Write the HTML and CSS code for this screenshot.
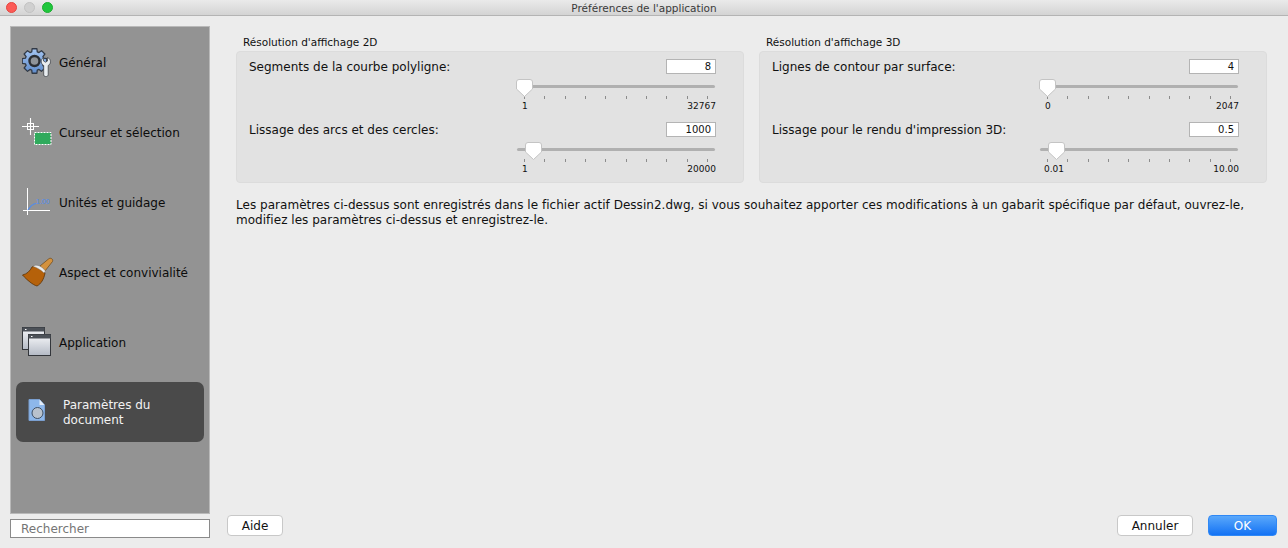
FILE: index.html
```html
<!DOCTYPE html>
<html lang="fr">
<head>
<meta charset="utf-8">
<title>Préférences de l'application</title>
<link rel="stylesheet" href="styles.css">
</head>
<body>
<div class="window">
  <header class="titlebar">
    <div class="lights"><span class="light red"></span><span class="light gray"></span><span class="light green"></span></div>
    <div class="title">Préférences de l'application</div>
  </header>
  <div class="content">
    <aside class="left">
      <nav class="sidebar">
        <div class="item">
          <svg class="icon" width="32" height="32" viewBox="0 0 32 32">
            <defs><linearGradient id="gear" x1="0" y1="0" x2="0" y2="1"><stop offset="0" stop-color="#a6c6f2"/><stop offset="1" stop-color="#5f8ccb"/></linearGradient></defs>
            <path transform="translate(12.500 15)" d="M9.080-2.780L12.270-2.390 12.270 2.390 9.080 2.780 8.390 4.460 10.360 6.990 6.990 10.360 4.460 8.390 2.780 9.080 2.390 12.270-2.390 12.270-2.780 9.080-4.460 8.390-6.990 10.360-10.360 6.990-8.390 4.460-9.080 2.780-12.270 2.390-12.270-2.390-9.080-2.780-8.390-4.460-10.360-6.990-6.990-10.360-4.460-8.390-2.780-9.080-2.390-12.270 2.390-12.270 2.780-9.080 4.460-8.390 6.990-10.360 10.360-6.990 8.390-4.460z" fill="url(#gear)" stroke="#323a46" stroke-width="1.300" stroke-linejoin="round"/>
            <circle cx="12.500" cy="15" r="5" fill="#8f9398" stroke="#2b2e33" stroke-width="2.400"/>
            <path d="M21.500 11.500v3.500l2 1.200 2-1.200v-3.500c1.800.8 3 2.300 3 4.300 0 1.800-1 3-2.300 3.700V29a1.800 1.800 0 0 1-1.800 1.500h-1a1.800 1.800 0 0 1-1.700-1.500V19.500c-1.400-.7-2.400-2-2.400-3.700 0-2 1-3.500 2.200-4.300z" fill="#e9edf0" stroke="#34383d" stroke-width=".7"/>
          </svg>
          <span class="label">Général</span>
        </div>
        <div class="item">
          <svg class="icon" width="32" height="32" viewBox="0 0 32 32"><path d="M8.500 2v17M0 10.500h17" stroke="#fff" stroke-width="1.100"/><rect x="5.500" y="7.500" width="6" height="6" fill="none" stroke="#fff"/><rect x="12.500" y="16.500" width="16.500" height="12" fill="#2faa5c" stroke="#fff" stroke-dasharray="2 1"/></svg>
          <span class="label">Curseur et sélection</span>
        </div>
        <div class="item">
          <svg class="icon" width="32" height="32" viewBox="0 0 32 32"><path d="M5.500 2v27M1 24.500h27" stroke="#fff"/><path d="M6 24c2-3 3-5 6-6l2-.5" stroke="#4f8cf0" fill="none" stroke-width="1.200"/><text class="unit-text" x="14" y="18">1.00</text></svg>
          <span class="label">Unités et guidage</span>
        </div>
        <div class="item">
          <svg class="icon" width="32" height="32" viewBox="0 0 32 32">
            <path d="M18 10L26.500 3C28.500 1.200 31.500 3 30.500 5.500L23 15z" fill="#d4923e" stroke="#6b4515" stroke-width=".7"/>
            <path d="M10 11C13 9 20 12 23 17C22 23 19 28 15 30C11 29 5 24 .5 19C5 18 8 15 10 11z" fill="#b5610a" stroke="#5e3204" stroke-width=".8"/>
            <path d="M11 10.500C14 7.500 20 10 23.500 15L22 17C18.500 13.500 14 11 11 10.500z" fill="#ececec" stroke="#666" stroke-width=".4"/>
          </svg>
          <span class="label">Aspect et convivialité</span>
        </div>
        <div class="item">
          <svg class="icon" width="32" height="32" viewBox="0 0 32 32">
            <defs><linearGradient id="win" x1="0" y1="0" x2="0" y2="1"><stop offset="0" stop-color="#f6f7f9"/><stop offset="1" stop-color="#b4bac5"/></linearGradient></defs>
            <rect x=".5" y="1.500" width="22" height="22" fill="url(#win)" stroke="#33363b"/><rect x=".5" y="1.500" width="22" height="4" fill="#4c5158"/><rect x="3" y="3" width="1.500" height="1" fill="#fff"/>
            <rect x="6.500" y="8.500" width="22" height="21" fill="url(#win)" stroke="#33363b"/><rect x="6.500" y="8.500" width="22" height="4" fill="#4c5158"/><rect x="9" y="10" width="1.500" height="1" fill="#fff"/></svg>
          <span class="label">Application</span>
        </div>
        <div class="item selected">
          <svg class="doc" width="18" height="26" viewBox="0 0 18 26"><path d="M1 .5h10.500l5 5.500v15.500H1z" fill="#8db7ea" stroke="#7a9fd0"/><path d="M11.500 .5V6h5z" fill="#e4edf8"/><circle cx="9.500" cy="14" r="5.500" fill="#b9c2cd" stroke="#3f5065"/></svg>
          <span class="label">Paramètres du document</span>
        </div>
      </nav>
      <div class="search"><span class="search-text">Rechercher</span></div>
    </aside>
    <main class="main">
      <div class="groups">
        <section class="group">
          <h2 class="group-title">Résolution d'affichage 2D</h2>
          <div class="panel">
            <div class="setting">
              <div class="setting-head"><span class="name">Segments de la courbe polyligne:</span><span class="value">8</span></div>
              <div class="slider">
                <div class="track"><svg class="thumb" width="17" height="18" viewBox="0 0 17 18"><path d="M3 .5h11a2.500 2.500 0 0 1 2.500 2.500v7L8.500 17.500.5 10V3A2.500 2.500 0 0 1 3 .5z" fill="#fff" stroke="#c4c4c4"/></svg></div>
                <div class="ticks"><i></i><i></i><i></i><i></i><i></i><i></i><i></i><i></i><i></i><i></i></div>
                <div class="range"><span class="min">1</span><span>32767</span></div>
              </div>
            </div>
            <div class="setting">
              <div class="setting-head"><span class="name">Lissage des arcs et des cercles:</span><span class="value">1000</span></div>
              <div class="slider">
                <div class="track"><svg class="thumb second" width="17" height="18" viewBox="0 0 17 18"><path d="M3 .5h11a2.500 2.500 0 0 1 2.500 2.500v7L8.500 17.500.5 10V3A2.500 2.500 0 0 1 3 .5z" fill="#fff" stroke="#c4c4c4"/></svg></div>
                <div class="ticks"><i></i><i></i><i></i><i></i><i></i><i></i><i></i><i></i><i></i><i></i></div>
                <div class="range"><span class="min">1</span><span>20000</span></div>
              </div>
            </div>
          </div>
        </section>
        <section class="group">
          <h2 class="group-title">Résolution d'affichage 3D</h2>
          <div class="panel">
            <div class="setting">
              <div class="setting-head"><span class="name">Lignes de contour par surface:</span><span class="value">4</span></div>
              <div class="slider">
                <div class="track"><svg class="thumb" width="17" height="18" viewBox="0 0 17 18"><path d="M3 .5h11a2.500 2.500 0 0 1 2.500 2.500v7L8.500 17.500.5 10V3A2.500 2.500 0 0 1 3 .5z" fill="#fff" stroke="#c4c4c4"/></svg></div>
                <div class="ticks"><i></i><i></i><i></i><i></i><i></i><i></i><i></i><i></i><i></i><i></i></div>
                <div class="range"><span class="min">0</span><span>2047</span></div>
              </div>
            </div>
            <div class="setting">
              <div class="setting-head"><span class="name">Lissage pour le rendu d'impression 3D:</span><span class="value">0.5</span></div>
              <div class="slider">
                <div class="track"><svg class="thumb second" width="17" height="18" viewBox="0 0 17 18"><path d="M3 .5h11a2.500 2.500 0 0 1 2.500 2.500v7L8.500 17.500.5 10V3A2.500 2.500 0 0 1 3 .5z" fill="#fff" stroke="#c4c4c4"/></svg></div>
                <div class="ticks"><i></i><i></i><i></i><i></i><i></i><i></i><i></i><i></i><i></i><i></i></div>
                <div class="range"><span>0.01</span><span>10.00</span></div>
              </div>
            </div>
          </div>
        </section>
      </div>
      <p class="note">Les paramètres ci-dessus sont enregistrés dans le fichier actif Dessin2.dwg, si vous souhaitez apporter ces modifications à un gabarit spécifique par défaut, ouvrez-le, modifiez les paramètres ci-dessus et enregistrez-le.</p>
      <footer class="actions">
        <button class="btn aide">Aide</button>
        <button class="btn annuler">Annuler</button>
        <button class="btn ok">OK</button>
      </footer>
    </main>
  </div>
</div>
</body>
</html>
```
FILE: styles.css
```css
* { box-sizing: border-box; }
html, body { margin: 0; padding: 0; }
body {
  width: 1288px;
  height: 548px;
  overflow: hidden;
  background: #ececec;
  font-family: "DejaVu Sans", Verdana, sans-serif;
  font-size: 12px;
  color: #111;
}
.window { display: flex; flex-direction: column; height: 548px; }
.titlebar {
  height: 16px;
  flex: none;
  display: flex;
  align-items: center;
  justify-content: center;
  position: relative;
  background: linear-gradient(#eaeaea, #d4d4d4);
  border-bottom: 1px solid #b4b4b4;
}
.title { font-size: 10.5px; color: #3a3a3a; line-height: 15px; padding-top: 1px; }
.lights { position: absolute; left: 6px; top: 2px; display: flex; gap: 7px; }
.light { width: 11px; height: 11px; border-radius: 50%; }
.red { background: #fc5b57; border: 1px solid #e5453f; }
.gray { background: #d0d0d0; border: 1px solid #c2c2c2; }
.green { background: #1fc63c; border: 1px solid #1aad2f; }
.content { flex: 1; display: flex; min-height: 0; padding: 10px 11px 0 10px; }
.left { width: 200px; flex: none; display: flex; flex-direction: column; }
.sidebar {
  height: 488px;
  background: #939393;
  border: 1px solid #b9b9b9;
}
.item { height: 70px; display: flex; align-items: center; padding-left: 11px; gap: 5px; }
.icon { flex: none; display: block; }
.label { font-size: 12px; line-height: 15px; color: #0c0c0c; width: 145px; padding-top: 2px; }
.unit-text { font-size: 7px; fill: #4f8cf0; font-family: "Liberation Sans", sans-serif; }
.selected {
  height: 60px;
  margin: 5px 5px;
  padding-left: 12px;
  gap: 17px;
  background: #4a4a4a;
  border-radius: 7px;
}
.selected .label { color: #f2f2f2; width: 110px; }
.doc { flex: none; display: block; }
.search {
  margin-top: 5px;
  height: 19px;
  background: #fff;
  border: 1px solid #8a8a8a;
  padding-left: 10px;
  line-height: 17px;
  color: #757575;
}
.search-text { display: block; padding-top: 1px; }
.main { flex: 1; min-width: 0; margin-left: 26px; display: flex; flex-direction: column; }
.groups { display: flex; gap: 15px; }
.group { width: 508px; }
.group-title { margin: 0 0 0 7px; height: 25px; padding-top: 10px; font-size: 10.5px; font-weight: normal; line-height: 13px; color: #111; }
.panel {
  height: 132px;
  padding: 7px 27px 0 12px;
  background: #e2e2e2;
  border: 1px solid #dcdcdc;
  border-radius: 4px;
}
.setting { height: 63px; }
.setting-head { display: flex; justify-content: space-between; align-items: center; height: 15px; }
.name { line-height: 13px; margin-top: 1px; }
.value {
  width: 50px;
  height: 15px;
  background: #fff;
  border: 1px solid #b4b4b4;
  text-align: right;
  padding-right: 4px;
  font-size: 10px;
  line-height: 13px;
}
.slider { width: 200px; margin-left: auto; }
.track { position: relative; height: 3px; margin: 11px 1px 0; background: #b0b0b0; border-radius: 2px; }
.thumb { position: absolute; left: -1px; top: -6px; display: block; }
.thumb.second { left: 8px; }
.ticks { display: flex; justify-content: space-between; margin: 8px 8px 0; height: 3px; }
.ticks i { display: block; width: 1px; height: 3px; background: #8c8c8c; }
.range { display: flex; justify-content: space-between; font-size: 9px; line-height: 11px; margin-top: 2px; padding-left: 5px; }
.min { padding-left: 1px; }
.note { margin: 15px 0 0; width: 1030px; font-size: 12px; letter-spacing: .03px; line-height: 15px; color: #111; }
.actions { margin-top: auto; display: flex; align-items: center; padding-bottom: 12px; }
.btn {
  font-family: "DejaVu Sans", Verdana, sans-serif;
  font-size: 12px;
  height: 21px;
  padding: 0;
  border-radius: 4px;
  border: 1px solid #c8c8c8;
  background: #fff;
  color: #111;
}
.aide { width: 56px; margin-left: -9px; }
.annuler { width: 76px; margin-left: auto; }
.ok {
  width: 69px;
  margin-left: 15px;
  border-color: #2f88f5;
  background: linear-gradient(#5aa8fb, #1372f4);
  color: #fff;
}
```
